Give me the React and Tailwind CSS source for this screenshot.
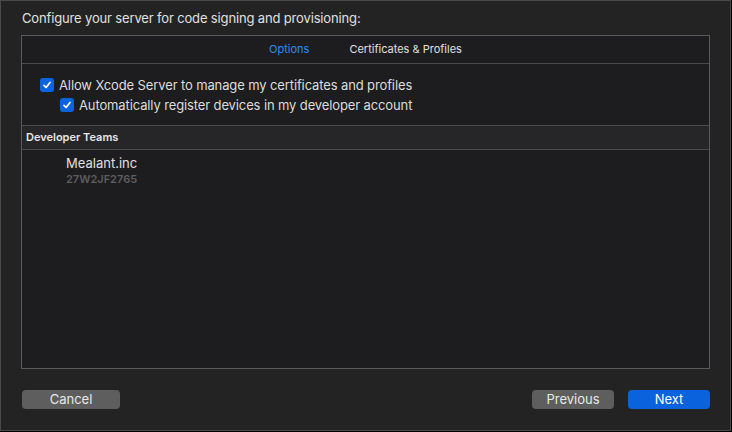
import React, { useState } from "react";

const Check = ({ checked, onChange }) => (
  <button
    onClick={onChange}
    className={`w-[14px] h-[14px] rounded-[3px] flex items-center justify-center shrink-0 ${
      checked ? "bg-[#0a64e0]" : "bg-[#3a3a3a] border border-[#666]"
    }`}
  >
    {checked && (
      <svg width="10" height="10" viewBox="0 0 10 10">
        <path d="M2 5.3 L4.1 7.5 L8 2.5" fill="none" stroke="white" strokeWidth="1.7" strokeLinecap="round" strokeLinejoin="round" />
      </svg>
    )}
  </button>
);

export default function App() {
  const [tab, setTab] = useState("options");
  const [manage, setManage] = useState(true);
  const [register, setRegister] = useState(true);

  return (
    <div
      className="w-[732px] h-[432px] bg-black text-[13px] text-[#dcdcdc]"
      style={{ fontFamily: 'Inter, "Liberation Sans", Arial, sans-serif' }}
    >
      <div className="w-[731px] h-[431px] bg-[#232323] border border-[#4a4a4a] flex flex-col px-[20px]">
        <div className="h-[34px] pt-[9px] pl-[1px] text-[#e0e0e0] leading-[16px] tracking-[-0.15px]">
          Configure your server for code signing and provisioning:
        </div>

        <div className="h-[334px] border border-[#5a5a5a] bg-[#1d1d1f] flex flex-col">
          <div className="h-[28px] border-b border-[#4a4a4a] flex justify-center items-center gap-[40px] text-[11px]">
            <button
              onClick={() => setTab("options")}
              className={tab === "options" ? "text-[#2d8cf0]" : "text-[#e0e0e0]"}
            >
              Options
            </button>
            <button
              onClick={() => setTab("certs")}
              className={tab === "certs" ? "text-[#2d8cf0]" : "text-[#e0e0e0]"}
            >
              Certificates &amp; Profiles
            </button>
          </div>

          <div className="h-[62px] border-b border-[#4a4a4a] pt-[14px] flex flex-col gap-[6px] leading-[14px] tracking-[-0.12px]">
            <label className="flex items-center gap-[5px] pl-[18px]">
              <Check checked={manage} onChange={() => setManage(!manage)} />
              <span>Allow Xcode Server to manage my certificates and profiles</span>
            </label>
            <label className="flex items-center gap-[5px] pl-[38px]">
              <Check checked={register} onChange={() => setRegister(!register)} />
              <span>Automatically register devices in my developer account</span>
            </label>
          </div>

          <div className="h-[24px] bg-[#262628] border-b border-[#4a4a4a] flex items-center pl-[4px] text-[11px] font-semibold text-[#e6e6e6]">
            Developer Teams
          </div>

          <div className="pl-[44px] pt-[5px] flex flex-col">
            <span className="text-[13px] text-[#e0e0e0] leading-[16px]">Mealant.inc</span>
            <span className="text-[11px] font-semibold text-[#5e5e5e] leading-[16px]">27W2JF2765</span>
          </div>
        </div>

        <div className="flex items-center mt-[21px] pl-[1px]">
          <button className="w-[98px] h-[19px] rounded-[4px] bg-[#5e5e5e] text-[#e8e8e8] leading-[19px]">
            Cancel
          </button>
          <div className="flex-1" />
          <button className="w-[82px] h-[19px] rounded-[4px] bg-[#5e5e5e] text-[#e8e8e8] leading-[19px]">
            Previous
          </button>
          <button className="w-[82px] h-[19px] rounded-[4px] bg-[#0a62dc] text-white leading-[19px] ml-[14px]">
            Next
          </button>
        </div>
      </div>
    </div>
  );
}
